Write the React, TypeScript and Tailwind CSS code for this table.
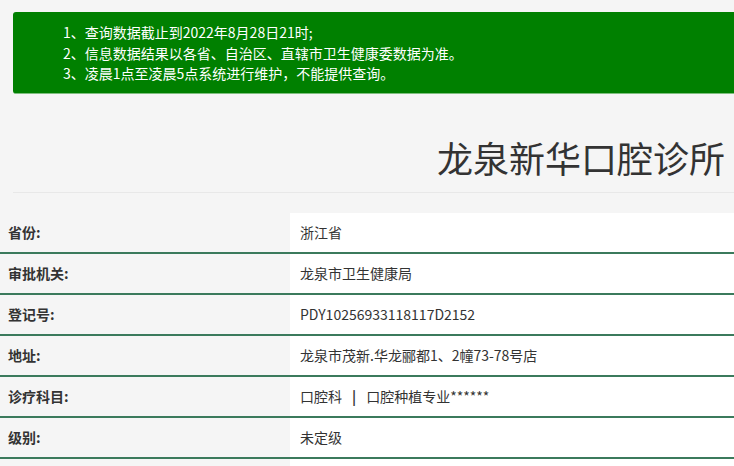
const notices = [
  "1、查询数据截止到2022年8月28日21时;",
  "2、信息数据结果以各省、自治区、直辖市卫生健康委数据为准。",
  "3、凌晨1点至凌晨5点系统进行维护，不能提供查询。",
]

const rows = [
  { label: "省份:", value: "浙江省" },
  { label: "审批机关:", value: "龙泉市卫生健康局" },
  { label: "登记号:", value: "PDY10256933118117D2152" },
  { label: "地址:", value: "龙泉市茂新.华龙郦都1、2幢73-78号店" },
  { label: "诊疗科目:", value: "subjects" },
  { label: "级别:", value: "未定级" },
]

export default function App() {
  return (
    <div
      className="h-[466px] w-[734px] overflow-hidden bg-[#f5f5f5] text-[#333]"
      style={{ fontFamily: '"Noto Sans CJK SC", "Noto Sans", sans-serif' }}
    >
      <div className="pt-[12px] pl-[13px]">
        <div className="-mr-2 rounded-[3px] border-b border-[#7fbf7f] bg-[#008000] pt-[10px] pb-[9px] pl-[50px] text-[14px] leading-[20.5px] text-white">
          {notices.map((n) => (
            <div key={n}>{n}</div>
          ))}
        </div>
      </div>

      <div className="ml-[13px] mt-[42px] border-b border-[#e8e8e8] pb-[14px] pr-[9px] text-right text-[36px] leading-[42px] text-[#333]">
        龙泉新华口腔诊所
      </div>

      <div className="mt-[20px]">
        {rows.map((r) => (
          <div key={r.label} className="flex h-[41px] border-b-2 border-[#3b7a5c]">
            <div className="flex w-[290px] items-center pl-[8px] text-[14px] font-bold">{r.label}</div>
            <div className="flex flex-1 items-center whitespace-pre bg-white pl-[10px] text-[14px]">
              {r.value === "subjects" ? (
                <>
                  口腔科<span className="px-[10px] font-bold">|</span>口腔种植专业******
                </>
              ) : (
                r.value
              )}
            </div>
          </div>
        ))}
        <div className="flex h-[41px]">
          <div className="w-[290px]" />
          <div className="flex-1 bg-white" />
        </div>
      </div>
    </div>
  )
}
